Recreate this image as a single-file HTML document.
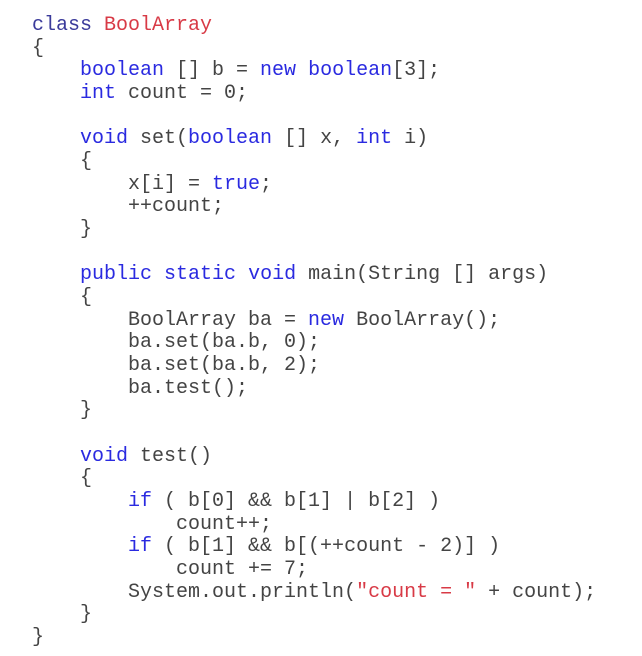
<!DOCTYPE html>
<html><head><style>
html,body{margin:0;padding:0;background:#fff;width:642px;height:656px;overflow:hidden}
pre{position:absolute;left:32px;top:15px;margin:0;font-family:"Liberation Mono","Courier New",monospace;font-size:20px;line-height:22.67px;color:#444;}
.k{color:#2a2ae0}.c{color:#3a3a9a}.r{color:#d83a46}
</style></head><body>
<pre><span class="c">class</span> <span class="r">BoolArray</span>
{
    <span class="k">boolean</span> [] b = <span class="k">new</span> <span class="k">boolean</span>[3];
    <span class="k">int</span> count = 0;

    <span class="k">void</span> set(<span class="k">boolean</span> [] x, <span class="k">int</span> i)
    {
        x[i] = <span class="k">true</span>;
        ++count;
    }

    <span class="k">public</span> <span class="k">static</span> <span class="k">void</span> main(String [] args)
    {
        BoolArray ba = <span class="k">new</span> BoolArray();
        ba.set(ba.b, 0);
        ba.set(ba.b, 2);
        ba.test();
    }

    <span class="k">void</span> test()
    {
        <span class="k">if</span> ( b[0] &amp;&amp; b[1] | b[2] )
            count++;
        <span class="k">if</span> ( b[1] &amp;&amp; b[(++count - 2)] )
            count += 7;
        System.out.println(<span class="r">"count = "</span> + count);
    }
}</pre>
</body></html>
